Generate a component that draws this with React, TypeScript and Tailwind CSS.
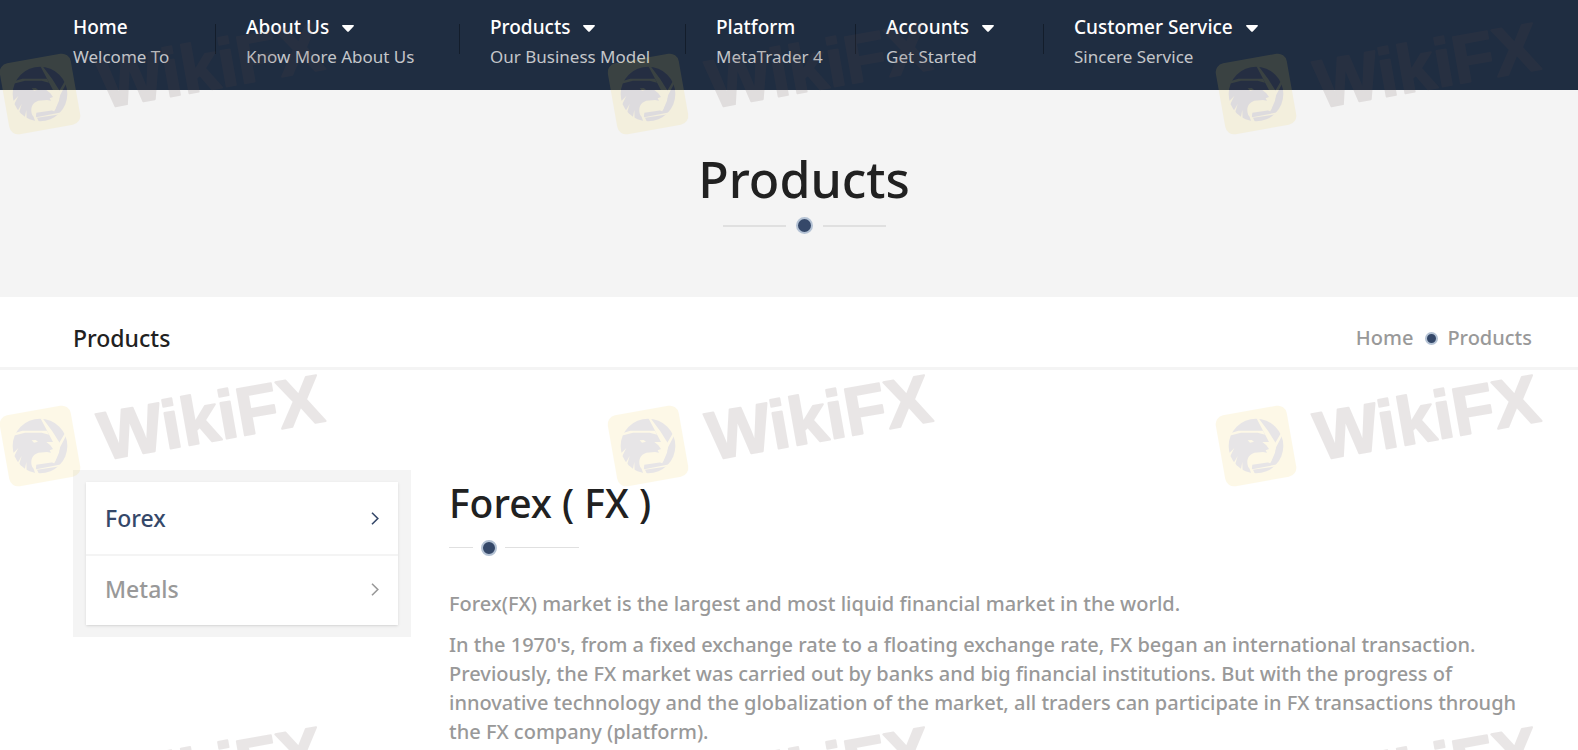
const navItems = [
  { title: "Home", sub: "Welcome To", menu: false, width: "w-[142px]" },
  { title: "About Us", sub: "Know More About Us", menu: true, width: "w-[213px]" },
  { title: "Products", sub: "Our Business Model", menu: true, width: "w-[195px]" },
  { title: "Platform", sub: "MetaTrader 4", menu: false, width: "w-[139px]" },
  { title: "Accounts", sub: "Get Started", menu: true, width: "w-[157px]" },
  { title: "Customer Service", sub: "Sincere Service", menu: true, width: "w-[213px]" },
];

const products = [
  { name: "Forex", active: true },
  { name: "Metals", active: false },
];

export default function App() {
  return (
    <div className="relative min-h-screen overflow-hidden bg-white font-['Noto_Sans','Open_Sans',sans-serif] text-[#212121]">
      <Header />
      <section className="flex flex-col items-center bg-[#f4f4f4] pt-[52px] pr-[43px] pb-[63px] pl-[73px]">
        <h1 className="text-[50px] leading-[75px] font-medium">Products</h1>
        <div className="flex items-center gap-[10px]">
          <span className="h-[2px] w-[63px] bg-[#e0e0e0]" />
          <span className="size-[17px] rounded-full border-2 border-[#b4c2d4] bg-[#354869]" />
          <span className="h-[2px] w-[63px] bg-[#e0e0e0]" />
        </div>
      </section>
      <div className="flex h-[73px] items-center justify-between border-b-3 border-[#f4f4f4] pt-[12px] pr-[46px] pl-[73px]">
        <p className="text-[23px] font-medium">Products</p>
        <Breadcrumb />
      </div>
      <main className="flex items-start pt-[100px] pr-[46px] pl-[73px]">
        <Sidebar />
        <Article />
      </main>
      <Watermark />
    </div>
  );
}

function Header() {
  return (
    <header className="bg-[#1f2d41]">
      <nav className="flex pt-[12px] pb-[18px] pl-[73px]">
        {navItems.map((item, i) => (
          <div key={item.title} className="flex">
            {i > 0 && <span className="mt-[12px] mr-[30px] h-[30px] w-px bg-[#131d2b]" />}
            <a href="#" className={`block whitespace-nowrap ${item.width}`}>
              <span className="flex items-center gap-[13px] text-[19px] leading-[30px] font-medium text-white">
                {item.title}
                {item.menu && <Caret />}
              </span>
              <span className="block text-[17px] leading-[30px] text-[#c4c6ca]">{item.sub}</span>
            </a>
          </div>
        ))}
      </nav>
    </header>
  );
}

function Caret() {
  return (
    <svg className="mt-[2px] h-[7px] w-[12px]" viewBox="0 0 12 7" fill="currentColor">
      <path d="M.8 0h10.400c.7 0 1 .7.5 1.200L6.800 6.500c-.4.400-1.200.400-1.600 0L.3 1.200C-.2.700.1 0 .8 0z" />
    </svg>
  );
}

function Breadcrumb() {
  return (
    <nav className="flex items-center text-[20px] font-medium text-[#999]">
      <a href="#">Home</a>
      <span className="mr-[9px] ml-[12px] size-[13px] rounded-full border-2 border-[#b4c2d4] bg-[#354869]" />
      <span>Products</span>
    </nav>
  );
}

function Sidebar() {
  return (
    <aside className="w-[338px] shrink-0 bg-[#f4f4f4] px-[13px] py-[12px]">
      <ul className="divide-y-2 divide-[#f4f4f4] bg-white pt-[3px] shadow-sm">
        {products.map((p) => (
          <li key={p.name}>
            <a
              href="#"
              className={`flex h-[69px] items-center justify-between px-[19px] pb-[2px] text-[23px] font-medium ${p.active ? "text-[#354869]" : "text-[#999]"}`}
            >
              {p.name}
              <svg className="h-[13px] w-[8px]" viewBox="0 0 8 13" fill="none" stroke="currentColor" strokeWidth="1.600">
                <path d="M1 .8l5.800 5.700L1 12.200" />
              </svg>
            </a>
          </li>
        ))}
      </ul>
    </aside>
  );
}

function Article() {
  return (
    <article className="ml-[38px] min-w-0 flex-1">
      <h2 className="text-[39px] leading-[66px] font-medium">Forex ( FX )</h2>
      <div className="mt-[3px] flex h-[17px] items-center">
        <span className="h-px w-[24px] bg-[#e0e0e0]" />
        <span className="mx-[8px] size-[16px] rounded-full border-2 border-[#b4c2d4] bg-[#354869]" />
        <span className="h-px w-[74px] bg-[#e0e0e0]" />
      </div>
      <div className="mt-[33px] space-y-[12px] text-[20px] leading-[29px] font-medium text-[#999]">
        <p>Forex(FX) market is the largest and most liquid financial market in the world.</p>
        <p>
          In the 1970's, from a fixed exchange rate to a floating exchange rate, FX began an international transaction.
          Previously, the FX market was carried out by banks and big financial institutions. But with the progress of
          innovative technology and the globalization of the market, all traders can participate in FX transactions
          through the FX company (platform).
        </p>
      </div>
    </article>
  );
}

// Repeated brand mark laid over the whole page
function Watermark() {
  return (
    <svg className="pointer-events-none absolute inset-0 h-full w-full" aria-hidden="true">
      {[94, 446, 798].map((y) =>
        [40, 648, 1256].map((x) => (
          <g key={`${x}-${y}`} transform={`translate(${x} ${y})`} opacity=".13">
            <rect x="-36" y="-36" width="72" height="72" rx="9" fill="#f0cf4c" transform="rotate(-10)" />
            <Eagle />
            <text
              x="60"
              y="25"
              transform="rotate(-10)"
              className="font-['Liberation_Sans'] text-[68px] font-bold"
              fill="#5e4848"
              stroke="#5e4848"
              strokeWidth="2"
              strokeLinejoin="round"
            >
              WikiFX
            </text>
          </g>
        )),
      )}
    </svg>
  );
}

// Eagle head inside a camera shutter
function Eagle() {
  return (
    <g transform="scale(.3333) translate(-145 -138)">
      <circle cx="145" cy="138" r="82" fill="#4e3c50" />
      <g fill="#f0cf4c">
        <path d="M70 99 L92 92 L166 92 L172 104 L150 98 L100 98 L62 108 Z" />
        <path d="M146 54 L154 56 L182 94 L206 132 L202 158 L190 186 L134 194 L132 210 L122 202 C114 180 122 164 140 158 L166 156 L178 158 L174 151 L184 147 L176 136 L164 126 L184 126 Z" />
        <path d="M224 92 L228 98 L206 140 L188 190 L182 188 L202 130 Z" />
        <path d="M120 190 L134 208 L214 192 L212 198 L136 209 L142 222 L132 224 Z" />
        <path d="M120 121 L132 120 L139 125 L127 128 Z" />
        <path d="M60 164 L80 144 L66 172 Z" />
        <path d="M74 196 L90 168 L80 202 Z" />
        <path d="M97 220 L104 186 L105 220 Z" />
      </g>
    </g>
  );
}
